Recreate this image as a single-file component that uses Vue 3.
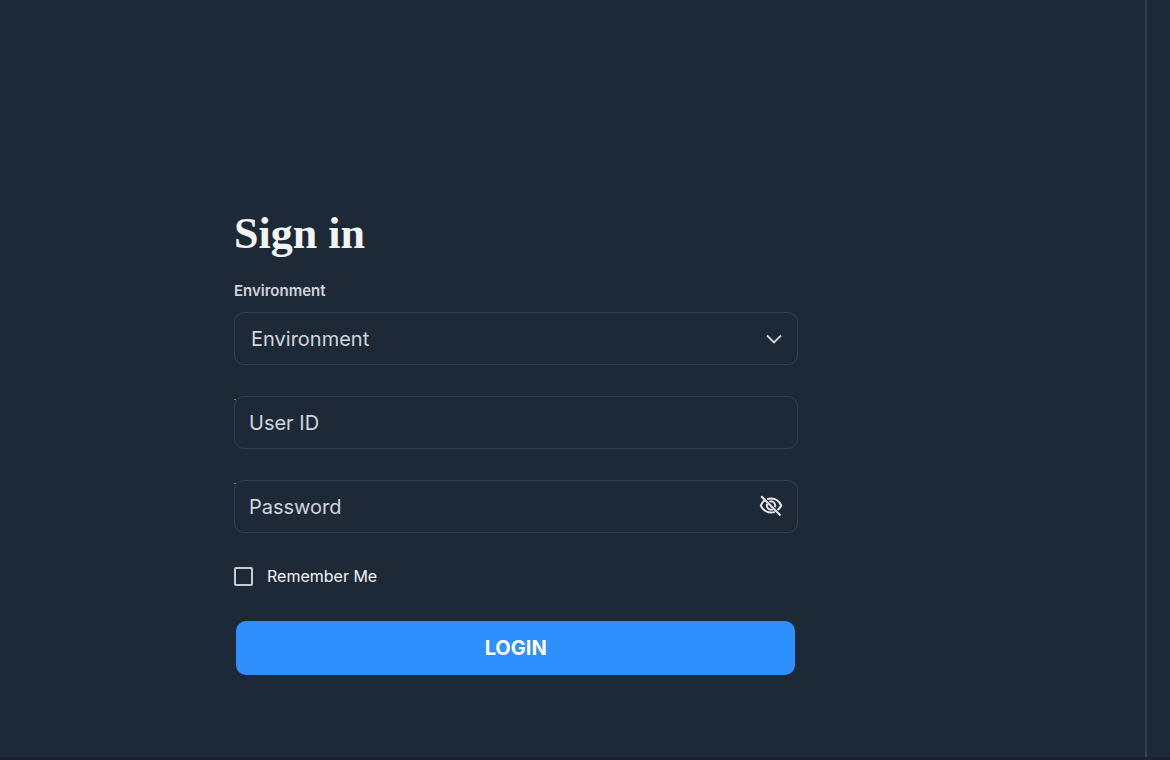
<script setup>
import { ref } from 'vue'

const environment = ref('')
const userId = ref('')
const password = ref('')
const remember = ref(false)
const visible = ref(false)
</script>

<template>
  <div class="page">
    <main class="pane">
      <form class="form" @submit.prevent>
        <h1>Sign in</h1>
        <label class="label" for="environment">Environment</label>
        <div class="field">
          <select id="environment" v-model="environment">
            <option value="">Environment</option>
          </select>
          <svg class="chevron" viewBox="0 0 16 10" aria-hidden="true">
            <path d="M1 1.500 8 8.500 15 1.500" fill="none" stroke="currentColor" stroke-width="1.8" />
          </svg>
        </div>
        <div class="field marked">
          <input v-model="userId" type="text" placeholder="User ID" aria-label="User ID" />
        </div>
        <div class="field marked">
          <input v-model="password" :type="visible ? 'text' : 'password'" placeholder="Password" aria-label="Password" />
          <button class="toggle" type="button" aria-label="Toggle password visibility" @click="visible = !visible">
            <svg viewBox="0 0 24 24" aria-hidden="true">
              <g fill="none" stroke="currentColor" stroke-width="2">
                <path d="M8.200 5.100A12 12 0 0 1 12 4.500c4.600 0 8.200 2.700 10.200 7a11.500 11.500 0 0 1-3.700 4.500M15.800 17.900A12 12 0 0 1 12 18.500c-4.600 0-8.200-2.700-10.200-7A11.500 11.500 0 0 1 5.500 6.500" />
                <path d="M10.300 7.700a4.200 4.200 0 0 1 5.500 5.500M13.700 15.300a4.200 4.200 0 0 1-5.500-5.500" />
                <path d="M2.200 2.200 21.500 21.500" />
              </g>
            </svg>
          </button>
        </div>
        <label class="remember">
          <input v-model="remember" type="checkbox" />
          <span>Remember Me</span>
        </label>
        <button class="login" type="submit">LOGIN</button>
      </form>
    </main>
    <aside class="side"></aside>
  </div>
</template>

<style>
body {
  margin: 0;
  background: #1e2938;
}
</style>

<style scoped>
.page {
  box-sizing: border-box;
  display: flex;
  min-height: 100vh;
  background: #1e2938;
  border-bottom: 3px solid #1c2033;
  color: #d1d5dc;
  font-family: Inter, "Liberation Sans", sans-serif;
}
.pane {
  flex: 1;
  padding: 208px 29.6% 80px 20%;
  border-right: 2px solid #364153;
}
.side {
  width: 2%;
}
.form {
  display: flex;
  flex-direction: column;
}
h1 {
  margin: 0;
  color: #f3f4f6;
  font: bold 44px/52px "Liberation Serif", serif;
}
.label {
  margin-top: 21px;
  font-size: 15px;
  font-weight: 600;
  line-height: 20px;
}
.field {
  position: relative;
  display: flex;
  margin-bottom: 31px;
}
.label + .field {
  margin-top: 11px;
}
.field select,
.field input {
  box-sizing: border-box;
  width: 100%;
  height: 53px;
  padding: 0 14px;
  border: 1px solid #323d4f;
  border-radius: 10px;
  background: transparent;
  color: #d1d5dc;
  font: 20px/24px Inter, "Liberation Sans", sans-serif;
  appearance: none;
}
.field select {
  padding: 0 16px;
}
.field input::placeholder {
  color: #d1d5dc;
  opacity: 1;
}
.marked::before {
  content: "";
  position: absolute;
  top: 3px;
  left: 0;
  width: 2px;
  height: 1px;
  background: #4d82b8;
}
.chevron {
  position: absolute;
  top: 22px;
  right: 16px;
  width: 16px;
  height: 10px;
  pointer-events: none;
}
.toggle {
  position: absolute;
  top: 14px;
  right: 15px;
  width: 24px;
  height: 24px;
  padding: 0;
  border: 0;
  background: none;
  color: #e5e7eb;
}
.toggle svg {
  display: block;
  width: 24px;
  height: 24px;
}
.remember {
  display: flex;
  align-items: center;
  align-self: flex-start;
  gap: 14px;
  color: #f3f4f6;
  font-size: 16px;
  line-height: 24px;
}
.remember input {
  box-sizing: border-box;
  width: 19px;
  height: 19px;
  margin: 0;
  border: 2px solid #c5cad3;
  border-radius: 2px;
  appearance: none;
}
.remember input:checked {
  background: #2e90fa;
}
.login {
  height: 54px;
  margin: 33px 3px 0 2px;
  border: 0;
  border-radius: 10px;
  background: #2e90fc;
  color: #fff;
  font: 700 20px/24px Inter, "Liberation Sans", sans-serif;
}
</style>
